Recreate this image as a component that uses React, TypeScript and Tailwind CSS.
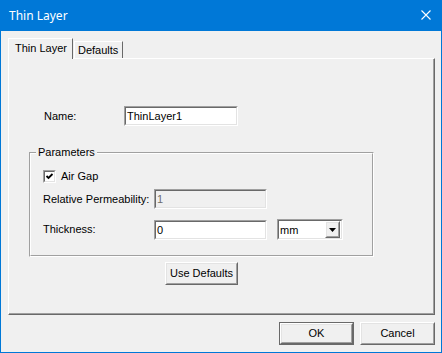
import React from "react";

const font = { fontFamily: '"Liberation Sans", Arial, sans-serif' };

function Sunken({ className = "", innerClass = "", children }: { className?: string; innerClass?: string; children?: React.ReactNode }) {
  return (
    <div className={`border border-t-[#a0a0a0] border-l-[#a0a0a0] border-b-white border-r-white ${className}`}>
      <div className={`h-full w-full border border-t-[#696969] border-l-[#696969] border-b-[#e3e3e3] border-r-[#e3e3e3] ${innerClass}`}>
        {children}
      </div>
    </div>
  );
}

function Button({ label, className = "", isDefault = false }: { label: string; className?: string; isDefault?: boolean }) {
  const inner = (
    <div className="h-full w-full border border-t-white border-l-white border-r-[#696969] border-b-[#696969]">
      <div className="flex h-full w-full items-center justify-center border border-t-[#e3e3e3] border-l-[#e3e3e3] border-r-[#a0a0a0] border-b-[#a0a0a0] text-[11px] text-black">
        {label}
      </div>
    </div>
  );
  if (isDefault) {
    return <div className={`border border-[#696969] ${className}`}>{inner}</div>;
  }
  return <div className={className}>{inner}</div>;
}

export default function App() {
  return (
    <div className="flex h-[353px] w-[442px] flex-col border border-[#0078d7] bg-[#f0f0f0]" style={font}>
      {/* Title bar */}
      <div className="flex h-[30px] items-start bg-[#0078d7]">
        <span className="ml-[8px] mt-[7px] text-[12px] leading-[16px] text-white" style={{ fontFamily: '"Noto Sans", "Open Sans", sans-serif' }}>
          Thin Layer
        </span>
        <svg className="ml-auto mr-[10px] mt-[9px]" width="10" height="10" viewBox="0 0 10 10">
          <path d="M0.5 0.5 L9.5 9.5 M9.5 0.5 L0.5 9.5" stroke="white" strokeWidth="1.1" fill="none" />
        </svg>
      </div>

      {/* Tabs */}
      <div className="ml-[7px] mt-[7px] flex h-[20px] items-end">
        <div className="relative z-10 -mb-px flex h-[21px] w-[65px] items-start border-l border-t border-r border-l-white border-t-white border-r-[#696969] bg-[#f0f0f0] pl-[6px] pt-[2px] text-[11px] leading-[14px] text-black">
          Thin Layer
        </div>
        <div className="ml-px flex h-[17px] w-[49px] items-start border-l border-t border-r border-l-white border-t-white border-r-[#696969] pl-[3px] pt-[1px] text-[11px] leading-[14px] text-black">
          Defaults
        </div>
      </div>

      {/* Panel */}
      <div className="ml-[7px] h-[257px] w-[427px] border border-t-white border-l-white border-r-[#696969] border-b-[#696969]">
        <div className="flex h-full w-full flex-col border-r border-b border-r-[#a0a0a0] border-b-[#a0a0a0]">
          {/* Name row */}
          <div className="ml-[35px] mt-[47px] flex h-[20px] items-center text-[11px] text-black">
            <span className="w-[80px]">Name:</span>
            <Sunken className="h-[20px] w-[114px]" innerClass="bg-white flex items-center pl-px">
              <span className="text-[11px] leading-[14px]">ThinLayer1</span>
            </Sunken>
          </div>

          {/* Group box */}
          <div className="relative ml-[20px] mt-[26px] h-[105px] w-[345px] border border-t-[#a0a0a0] border-l-[#a0a0a0] border-r-white border-b-white">
            <div className="flex h-full w-full flex-col border border-t-white border-l-white border-r-[#a0a0a0] border-b-[#a0a0a0]">
              {/* Air gap */}
              <div className="ml-[12px] mt-[16px] flex h-[13px] items-center text-[11px] text-black">
                <Sunken className="h-[13px] w-[13px]" innerClass="bg-white">
                  <svg width="9" height="9" viewBox="0 0 9 9" className="block">
                    <path d="M1.5 4 L3.5 6 L7.5 2" stroke="black" strokeWidth="1.8" fill="none" />
                  </svg>
                </Sunken>
                <span className="ml-[5px]">Air Gap</span>
              </div>
              {/* Relative permeability */}
              <div className="ml-[12px] mt-[6px] flex h-[20px] items-center text-[11px] text-black">
                <span className="w-[111px]">Relative Permeability:</span>
                <Sunken className="h-[20px] w-[113px]" innerClass="bg-[#f0f0f0] flex items-center pl-px">
                  <span className="text-[11px] leading-[14px] text-[#6d6d6d]">1</span>
                </Sunken>
              </div>
              {/* Thickness */}
              <div className="ml-[12px] mt-[10px] flex h-[21px] items-center text-[11px] text-black">
                <span className="w-[111px]">Thickness:</span>
                <Sunken className="h-[20px] w-[113px]" innerClass="bg-white flex items-center pl-px">
                  <span className="text-[11px] leading-[14px]">0</span>
                </Sunken>
                <Sunken className="ml-[10px] h-[21px] w-[66px]" innerClass="bg-white flex items-center pl-px">
                  <span className="text-[11px] leading-[14px]">mm</span>
                  <div className="ml-auto mr-px h-[17px] w-[15px] border border-t-white border-l-white border-r-[#696969] border-b-[#696969]">
                    <div className="flex h-full w-full items-center justify-center border border-t-[#e3e3e3] border-l-[#e3e3e3] border-r-[#a0a0a0] border-b-[#a0a0a0] bg-[#f0f0f0]">
                      <svg width="7" height="4" viewBox="0 0 7 4" className="block">
                        <path d="M0 0 H7 L3.5 4 Z" fill="black" />
                      </svg>
                    </div>
                  </div>
                </Sunken>
              </div>
            </div>
            <span className="absolute left-[6px] top-[-8px] bg-[#f0f0f0] px-[2px] text-[11px] leading-[14px] text-black">
              Parameters
            </span>
          </div>

          {/* Use defaults */}
          <Button label="Use Defaults" className="ml-[156px] mt-[5px] h-[23px] w-[73px]" />
        </div>
      </div>

      {/* Footer */}
      <div className="mt-[7px] flex justify-end gap-[6px] pr-[6px]">
        <Button label="OK" className="h-[23px] w-[75px]" isDefault />
        <Button label="Cancel" className="h-[23px] w-[75px]" />
      </div>
    </div>
  );
}
